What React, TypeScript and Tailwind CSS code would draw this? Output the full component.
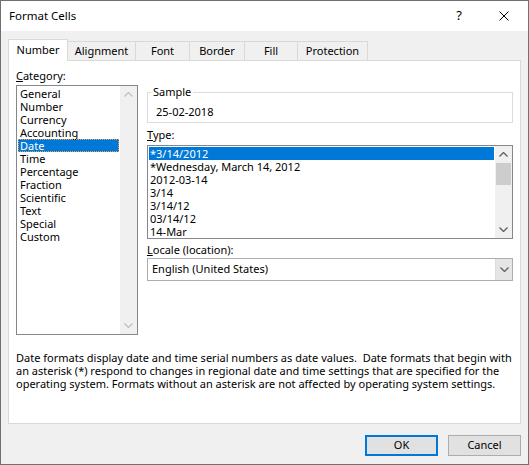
import React from 'react';

const categories = ['General', 'Number', 'Currency', 'Accounting', 'Date', 'Time', 'Percentage', 'Fraction', 'Scientific', 'Text', 'Special', 'Custom'];
const types = ['*3/14/2012', '*Wednesday, March 14, 2012', '2012-03-14', '3/14', '3/14/12', '03/14/12', '14-Mar'];
const tabs = [
  { label: 'Number', w: 'w-[60px]' },
  { label: 'Alignment', w: 'w-[69px]' },
  { label: 'Font', w: 'w-[55px]' },
  { label: 'Border', w: 'w-[56px]' },
  { label: 'Fill', w: 'w-[54px]' },
  { label: 'Protection', w: 'w-[71px]' },
];

function Chevron({ up, color }: { up?: boolean; color: string }) {
  return (
    <svg width="9" height="5" viewBox="0 0 9 5" fill="none">
      <polyline
        points={up ? '0.5,4.5 4.5,0.5 8.5,4.5' : '0.5,0.5 4.5,4.5 8.5,0.5'}
        stroke={color}
        strokeWidth="1.3"
      />
    </svg>
  );
}

function ScrollBar({ disabled }: { disabled?: boolean }) {
  const color = disabled ? '#c0c0c0' : '#606060';
  return (
    <div className="w-[17px] h-full bg-[#f0f0f0] flex flex-col">
      <div className="h-[17px] flex items-center justify-center">
        <Chevron up color={color} />
      </div>
      {!disabled && <div className="mx-px h-[22px] bg-[#cdcdcd]" />}
      <div className="flex-1" />
      <div className="h-[17px] flex items-center justify-center">
        <Chevron color={color} />
      </div>
    </div>
  );
}

export default function App() {
  return (
    <div className="w-[529px] h-[465px] flex flex-col border border-[#707070] bg-[#f0f0f0] text-[11px] text-black font-['Noto_Sans',sans-serif]">
      {/* title bar */}
      <div className="h-[30px] shrink-0 bg-white flex items-center pl-2">
        <span className="text-[11.5px]">Format Cells</span>
        <span className="ml-auto mr-[37px] text-[13px]">?</span>
        <svg className="mr-[19px]" width="10" height="10" viewBox="0 0 10 10">
          <path d="M0.5 0.5 L9.5 9.5 M9.5 0.5 L0.5 9.5" stroke="#000" strokeWidth="1" />
        </svg>
      </div>

      <div className="flex-1 flex flex-col px-[7px] pt-[8px]">
        {/* tabs */}
        <div className="flex items-start -mb-px">
          {tabs.map((t, i) =>
            i === 0 ? (
              <div
                key={t.label}
                className={`${t.w} h-[22px] relative z-10 bg-white border-l border-t border-r border-[#d9d9d9] flex items-center justify-center`}
              >
                {t.label}
              </div>
            ) : (
              <div
                key={t.label}
                className={`${t.w} -ml-px mt-[2px] h-[19px] bg-[#f0f0f0] border-l border-t border-r border-[#d9d9d9] flex items-center justify-center`}
              >
                {t.label}
              </div>
            )
          )}
        </div>

        {/* panel */}
        <div className="h-[364px] bg-white border border-[#d9d9d9] flex flex-col pl-[7px] pt-[8px]">
          <div className="flex">
            {/* category */}
            <div className="w-[122px] flex flex-col">
              <div className="h-[14px] leading-[14px]">
                <span className="underline">C</span>ategory:
              </div>
              <div className="mt-[2px] h-[250px] border border-[#828790] flex">
                <div className="flex-1 pt-px px-px">
                  {categories.map((c) => (
                    <div
                      key={c}
                      className={
                        c === 'Date'
                          ? 'h-[13px] leading-[13px] pl-[2px] bg-[#0078d7] text-white outline outline-1 outline-dotted outline-[#f5a040] -outline-offset-1'
                          : 'h-[13px] leading-[13px] pl-[2px]'
                      }
                    >
                      {c}
                    </div>
                  ))}
                </div>
                <ScrollBar disabled />
              </div>
            </div>

            {/* right side */}
            <div className="ml-[9px] w-[366px] flex flex-col">
              <fieldset className="mt-[16px] border border-[#dcdcdc] pb-[3px]">
                <legend className="ml-[3px] px-[2px] leading-[14px]">Sample</legend>
                <div className="pt-[6px] pl-[8px] leading-[14px]">25-02-2018</div>
              </fieldset>

              <div className="mt-[5px] h-[14px] leading-[14px]">
                <span className="underline">T</span>ype:
              </div>
              <div className="mt-[3px] h-[94px] border border-[#828790] flex">
                <div className="flex-1 pt-px px-px overflow-hidden">
                  {types.map((t, i) => (
                    <div
                      key={t}
                      className={
                        i === 0
                          ? 'h-[13px] leading-[13px] pl-px bg-[#0078d7] text-white'
                          : 'h-[13px] leading-[13px] pl-px whitespace-nowrap'
                      }
                    >
                      {t}
                    </div>
                  ))}
                </div>
                <ScrollBar />
              </div>

              <div className="mt-[4px] h-[14px] leading-[14px]">
                <span className="underline">L</span>ocale (location):
              </div>
              <div className="mt-px h-[23px] border border-[#adadad] flex items-center">
                <span className="pl-[4px] flex-1">English (United States)</span>
                <div className="w-[17px] h-full bg-[#e5e5e5] border-l border-[#dcdcdc] flex items-center justify-center">
                  <Chevron color="#606060" />
                </div>
              </div>
            </div>
          </div>

          <p className="mt-[16px] leading-[13px] whitespace-pre">
            {'Date formats display date and time serial numbers as date values.  Date formats that begin with\nan asterisk (*) respond to changes in regional date and time settings that are specified for the\noperating system. Formats without an asterisk are not affected by operating system settings.'}
          </p>
        </div>

        {/* buttons */}
        <div className="mt-[11px] flex justify-end gap-[10px]">
          <button className="w-[73px] h-[21px] bg-[#e1e1e1] border-2 border-[#0078d7] flex items-center justify-center">
            OK
          </button>
          <button className="w-[73px] h-[21px] bg-[#e1e1e1] border border-[#adadad] flex items-center justify-center">
            Cancel
          </button>
        </div>
      </div>
    </div>
  );
}
